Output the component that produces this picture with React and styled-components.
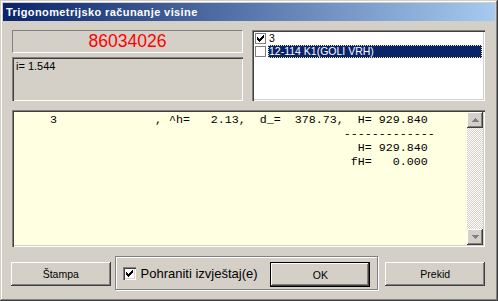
import React from 'react'
import styled, { createGlobalStyle, css } from 'styled-components'

const Global = createGlobalStyle`
  body {
    margin: 0;
    background: #d4d0c8;
  }
  * {
    box-sizing: border-box;
  }
`

const sunken = css`
  box-shadow: inset 1px 1px #808080, inset 2px 2px #404040,
    inset -1px -1px #ffffff, inset -2px -2px #d4d0c8;
`

const raised = css`
  box-shadow: inset -1px -1px #404040, inset 1px 1px #ffffff,
    inset -2px -2px #808080, inset 2px 2px #d4d0c8;
`

const Window = styled.div`
  width: 498px;
  height: 301px;
  padding: 3px;
  background: #d4d0c8;
  box-shadow: inset -1px -1px #404040, inset 1px 1px #d4d0c8,
    inset -2px -2px #808080, inset 2px 2px #ffffff;
  display: flex;
  flex-direction: column;
  font-family: "Liberation Sans", Arial, sans-serif;
  font-size: 11px;
  color: #000;
`

const TitleBar = styled.div`
  height: 18px;
  padding-left: 3px;
  display: flex;
  align-items: center;
  background: linear-gradient(to right, #0a246a, #a6caf0);
  color: #fff;
  font-weight: bold;
  font-size: 11px;
  letter-spacing: 0.4px;
`

const Body = styled.div`
  display: flex;
  flex-direction: column;
  gap: 9px;
  padding: 9px 10px 0 9px;
`

const TopRow = styled.div`
  display: grid;
  grid-template-columns: 231px 1fr;
  column-gap: 9px;
  height: 71px;
`

const LeftCol = styled.div`
  display: flex;
  flex-direction: column;
  gap: 4px;
`

const NumberBox = styled.div`
  height: 23px;
  border-top: 1px solid #808080;
  border-left: 1px solid #808080;
  border-bottom: 1px solid #fff;
  border-right: 1px solid #fff;
  display: flex;
  align-items: center;
  justify-content: center;
  color: #ff0000;
  font-size: 17.5px;
`

const InfoBox = styled.div`
  flex: 1;
  ${sunken};
  padding: 3px 4px;
  line-height: 13px;
`

const ListBox = styled.div`
  ${sunken};
  background: #fff;
  padding: 2px;
`

const ListRow = styled.div`
  height: 13px;
  display: flex;
  align-items: center;
`

const ListCheck = styled.span`
  width: 11px;
  height: 11px;
  margin-left: 1px;
  border: 1px solid #808080;
  background: #fff;
  display: flex;
  align-items: center;
  justify-content: center;
`

const ListLabel = styled.span`
  flex: 1;
  height: 13px;
  margin-left: 2px;
  margin-right: 1px;
  padding-left: 1px;
  font-size: 10.5px;
  line-height: 13px;
  white-space: nowrap;
  ${p => p.$selected && css`
    background: #0a246a;
    color: #fff;
    outline: 1px dotted #f3e7a8;
    outline-offset: -1px;
  `}
`

const TextArea = styled.div`
  height: 137px;
  ${sunken};
  background: #ffffe1;
  display: flex;
  padding: 2px;
`

const Report = styled.pre`
  flex: 1;
  margin: 0;
  padding: 1px 1px;
  font-family: "Liberation Mono", "Courier New", monospace;
  font-size: 11.67px;
  line-height: 14px;
`

const ScrollBar = styled.div`
  width: 16px;
  display: flex;
  flex-direction: column;
`

const ScrollButton = styled.div`
  width: 16px;
  height: 16px;
  background: #d4d0c8;
  ${raised};
  display: flex;
  align-items: center;
  justify-content: center;
`

const ScrollTrack = styled.div`
  flex: 1;
  background: repeating-conic-gradient(#ffffff 0 25%, #d4d0c8 0 50%) 0 0 / 2px 2px;
`

const BottomRow = styled.div`
  height: 34px;
  display: flex;
  align-items: flex-start;
`

const Button = styled.button`
  width: 100px;
  height: 24px;
  margin-top: 6px;
  margin-left: ${p => p.$ml || 0}px;
  padding: 0;
  border: none;
  background: #d4d0c8;
  font-family: "Liberation Sans", Arial, sans-serif;
  font-size: 10.5px;
  color: #000;
  ${raised};
  ${p => p.$default && css`
    margin-top: 5px;
    height: 25px;
    border: 1px solid #000;
  `}
`

const GroupBox = styled.div`
  width: 265px;
  height: 34px;
  margin-left: 4px;
  padding-left: 7px;
  border: 1px solid #808080;
  box-shadow: inset 1px 1px #fff, 1px 1px #fff;
  display: flex;
  align-items: flex-start;
`

const CheckField = styled.label`
  height: 13px;
  margin-top: 10px;
  display: flex;
  align-items: center;
  gap: 5px;
  font-size: 13px;
`

const CheckBox = styled.span`
  width: 13px;
  height: 13px;
  background: #fff;
  ${sunken};
  display: flex;
  align-items: center;
  justify-content: center;
`

const GroupButton = styled(Button)`
  margin-left: auto;
  margin-right: 7px;
`

const Tick = () => (
  <svg width="7" height="7" viewBox="0 0 7 7" shapeRendering="crispEdges">
    <path
      fill="#000"
      d="M6 0h1v1h-1z M5 1h2v1h-2z M0 2h1v1h-1z M4 2h3v1h-3z M0 3h2v1h-2z M3 3h3v1h-3z M0 4h5v1h-5z M1 5h3v1h-3z M2 6h1v1h-1z"
    />
  </svg>
)

const Arrow = ({ down }) => (
  <svg width="7" height="4" viewBox="0 0 7 4" shapeRendering="crispEdges">
    <path
      fill="#808080"
      d={down ? 'M0 0h7v1h-1v1h-1v1h-1v1h-1v-1h-1v-1h-1v-1h-1z' : 'M3 0h1v1h1v1h1v1h1v1h-7v-1h1v-1h1v-1h1z'}
    />
  </svg>
)

const reportText = [
  '     3              , ^h=   2.13,  d_=  378.73,  H= 929.840',
  '                                               -------------',
  '                                                 H= 929.840',
  '                                                fH=   0.000',
].join('\n')

const items = [
  { label: '3', checked: true },
  { label: '12-114 K1(GOLI VRH)', checked: false, selected: true },
]

const App = () => {
  return (
    <>
      <Global />
      <Window>
        <TitleBar>Trigonometrijsko računanje visine</TitleBar>
        <Body>
          <TopRow>
            <LeftCol>
              <NumberBox>86034026</NumberBox>
              <InfoBox>i= 1.544</InfoBox>
            </LeftCol>
            <ListBox>
              {items.map(it => (
                <ListRow key={it.label}>
                  <ListCheck>{it.checked && <Tick />}</ListCheck>
                  <ListLabel $selected={it.selected}>{it.label}</ListLabel>
                </ListRow>
              ))}
            </ListBox>
          </TopRow>
          <TextArea>
            <Report>{reportText}</Report>
            <ScrollBar>
              <ScrollButton><Arrow /></ScrollButton>
              <ScrollTrack />
              <ScrollButton><Arrow down /></ScrollButton>
            </ScrollBar>
          </TextArea>
          <BottomRow>
            <Button $ml={-1}>Štampa</Button>
            <GroupBox>
              <CheckField>
                <CheckBox><Tick /></CheckBox>
                Pohraniti izvještaj(e)
              </CheckField>
              <GroupButton $default>OK</GroupButton>
            </GroupBox>
            <Button $ml={7}>Prekid</Button>
          </BottomRow>
        </Body>
      </Window>
    </>
  )
}

export default App
